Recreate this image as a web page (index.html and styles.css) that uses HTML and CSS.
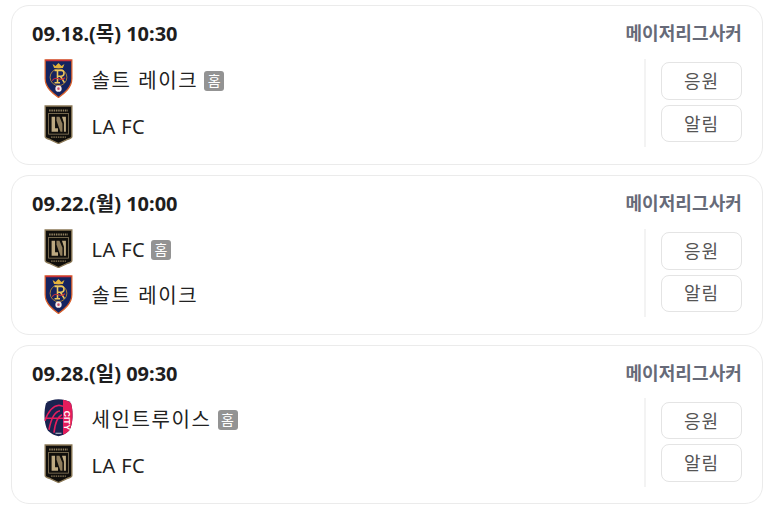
FILE: index.html
```html
<!DOCTYPE html>
<html lang="ko">
<head>
<meta charset="utf-8">
<title>경기 일정</title>
<link rel="stylesheet" href="styles.css">
</head>
<body>
<svg class="defs" width="0" height="0" aria-hidden="true">
  <defs>
    <symbol id="rsl" viewBox="0 0 29 40">
      <path d="M1 1H28V20C28 29 20 35 14.500 39C9 35 1 29 1 20Z" fill="#15235f" stroke="#d9612c" stroke-width="1.300"/>
      <path d="M1.500 1.500H27.500" stroke="#c8323a" stroke-width="1.600"/>
      <path d="M10 9L8.500 5L11.500 7L14.500 4L17.500 7L20.500 5L19 9Z" fill="#e3b23c"/>
      <circle cx="14.500" cy="18.500" r="8.500" fill="none" stroke="#a8813a" stroke-width="1"/>
      <path d="M10.500 11.500H17.500C21 11.500 21 17.500 17 17.500H13.500M13.500 11.500V24M10.500 24H16M16.500 17.500L20.500 24" fill="none" stroke="#edc75c" stroke-width="1.600"/>
      <path d="M8 22C10 19 12 19 14.500 20C17 21 19 21 21 19" fill="none" stroke="#c8323a" stroke-width="1.200"/>
      <circle cx="14.500" cy="30" r="3.200" fill="#f5eaea"/>
      <circle cx="14.500" cy="30" r="1.300" fill="#c9506a"/>
    </symbol>
    <symbol id="lafc" viewBox="0 0 29 40">
      <path d="M1 1H28V32C28 34 26 34 23 35L14.500 39L6 35C3 34 1 34 1 32Z" fill="#100e0b" stroke="#8c7a58" stroke-width="1.400"/>
      <path d="M5 5.500H24" stroke="#8f7f60" stroke-width="2" stroke-dasharray="1.500 .8"/>
      <rect x="4.500" y="8.500" width="20" height="21" fill="none" stroke="#8f7f60" stroke-width=".8"/>
      <path d="M7.500 12H11V23.500H14V27H7.500Z" fill="#bda981"/>
      <path d="M12.500 12H15.500L18.500 19V27H16.500L12.500 16Z" fill="#8f7d5c"/>
      <path d="M18 12H22V27H20V18Z" fill="#bda981"/>
      <path d="M7 32.500H22" stroke="#8c7a58" stroke-width="1.300" stroke-dasharray="1.500 .8"/>
    </symbol>
    <symbol id="stl" viewBox="0 0 29 38">
      <path d="M14.500 .5C19 .5 24 1.500 27 4.500C29.500 13 29 26 25 32C22 35 18 37 14.500 37.500C11 37 7 35 4 32C0 26 -.5 13 2 4.500C5 1.500 10 .5 14.500 .5Z" fill="#1a2350"/>
      <path d="M19 1C22.500 1.500 25 2.500 27 4.500C29.500 13 29 26 25 32C23 34 21 35 19 36Z" fill="#e41d5c"/>
      <path d="M1 22C4 13 9 7 15 6.500L19 7.500M5 31C7 20 11 13 16 12M10 34C11 25 13 18 18 16M1 19.500H19" fill="none" stroke="#e41d5c" stroke-width="1.600"/>
      <text class="city" transform="translate(20.300 12) rotate(90)">CITY</text>
      <path d="M11.500 34.500H17.500" stroke="#c9ccd8" stroke-width="1"/>
    </symbol>
  </defs>
</svg>
<main class="list">
  <article class="card">
    <header class="card-head">
      <h2 class="when">09.18.(목) 10:30</h2>
      <span class="league">메이저리그사커</span>
    </header>
    <div class="card-body">
      <div class="teams">
        <div class="team"><svg class="logo"><use href="#rsl"/></svg><span class="name">솔트 레이크</span><span class="home">홈</span></div>
        <div class="team"><svg class="logo"><use href="#lafc"/></svg><span class="name name-latin">LA FC</span></div>
      </div>
      <div class="actions">
        <button class="btn">응원</button>
        <button class="btn">알림</button>
      </div>
    </div>
  </article>
  <article class="card">
    <header class="card-head">
      <h2 class="when">09.22.(월) 10:00</h2>
      <span class="league">메이저리그사커</span>
    </header>
    <div class="card-body">
      <div class="teams">
        <div class="team"><svg class="logo"><use href="#lafc"/></svg><span class="name name-latin">LA FC</span><span class="home">홈</span></div>
        <div class="team"><svg class="logo"><use href="#rsl"/></svg><span class="name">솔트 레이크</span></div>
      </div>
      <div class="actions">
        <button class="btn">응원</button>
        <button class="btn">알림</button>
      </div>
    </div>
  </article>
  <article class="card">
    <header class="card-head">
      <h2 class="when">09.28.(일) 09:30</h2>
      <span class="league">메이저리그사커</span>
    </header>
    <div class="card-body">
      <div class="teams">
        <div class="team"><svg class="logo"><use href="#stl"/></svg><span class="name">세인트루이스</span><span class="home">홈</span></div>
        <div class="team"><svg class="logo"><use href="#lafc"/></svg><span class="name name-latin">LA FC</span></div>
      </div>
      <div class="actions">
        <button class="btn">응원</button>
        <button class="btn">알림</button>
      </div>
    </div>
  </article>
</main>
</body>
</html>
```
FILE: styles.css
```css
* { box-sizing: border-box; }
html, body { margin: 0; background: #fff; }
body { font-family: "Noto Sans", "Noto Sans CJK KR", sans-serif; color: #1e1e1e; }
.defs { position: absolute; }
.list { display: flex; flex-direction: column; gap: 10px; padding: 5.2px 17px 0 11px; }
.card { height: 159.7px; border: 1px solid #ebebeb; border-radius: 18px; padding: 12px 20px 0 20px; background: #fff; }
.card-head { display: flex; justify-content: space-between; align-items: flex-start; height: 40.8px; }
.when { margin: 0; font-size: 20px; font-weight: 700; line-height: 32.500px; color: #1e1e1e; }
.league { font-size: 18px; font-weight: 700; letter-spacing: .1px; line-height: 30px; color: #666a78; }
.card-body { display: flex; justify-content: space-between; }
.teams { display: flex; flex-direction: column; gap: 6.5px; padding-left: 12px; }
.team { display: flex; align-items: center; height: 39.5px; }
.logo { width: 29px; height: 39.5px; flex: none; }
.city { font-family: "Liberation Sans", sans-serif; font-size: 8.500px; font-weight: 700; fill: #fff; }
.name { margin: 4px 0 0 18.500px; font-size: 20px; letter-spacing: 1.6px; line-height: 28px; color: #222; }
.name-latin { letter-spacing: .4px; }
.home { margin: 4px 0 0 6px; width: 20px; height: 20px; border-radius: 3px; background: #939393; color: #fff; font-size: 14px; line-height: 20px; text-align: center; }
.actions { width: 98px; height: 88.5px; border-left: 2px solid #f3f3f3; padding: 3.4px 0 0 15px; display: flex; flex-direction: column; gap: 5px; }
.btn { width: 81px; height: 37.5px; flex: none; padding: 0 0 2px; border: 1px solid #e4e4e4; border-radius: 8px; background: #fff; color: #555; font-family: inherit; font-size: 18px; letter-spacing: 1px; }
```
